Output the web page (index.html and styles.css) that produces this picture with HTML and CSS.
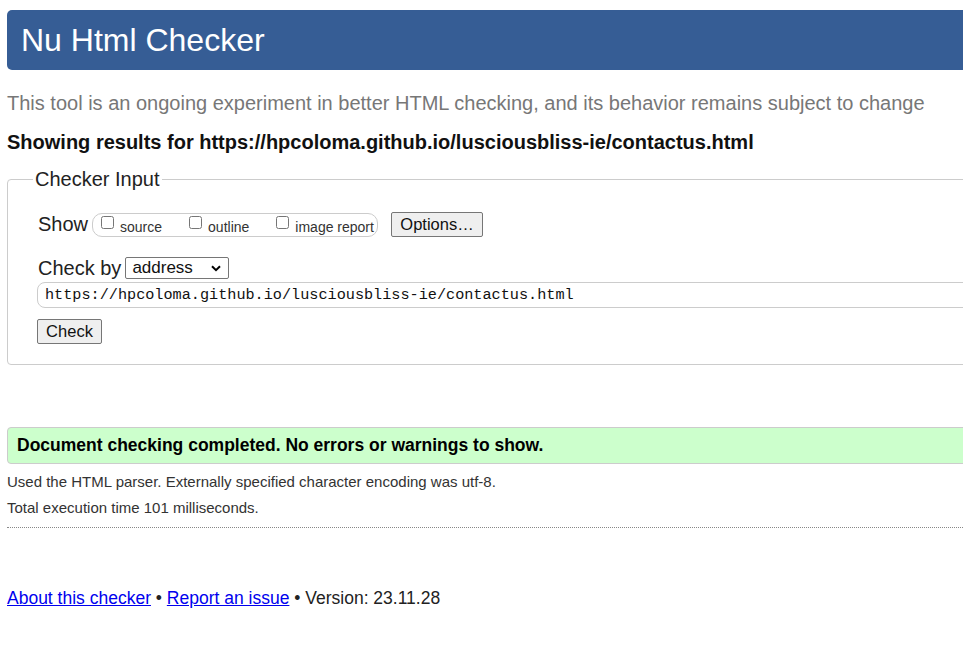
FILE: index.html
```html
<!DOCTYPE html>
<html lang="en">
<head>
<meta charset="utf-8">
<title>Nu Html Checker</title>
<link rel="stylesheet" href="styles.css">
</head>
<body>
<div class="page">
  <h1 class="banner">Nu Html Checker</h1>
  <p class="intro">This tool is an ongoing experiment in better HTML checking, and its behavior remains subject to change</p>
  <p class="results-for">Showing results for https://hpcoloma.github.io/lusciousbliss-ie/contactus.html</p>
  <form class="checker">
    <fieldset class="input-set">
      <legend class="input-legend">Checker Input</legend>
      <div class="row show-row">
        <span class="row-label">Show</span>
        <span class="show-group">
          <label class="opt"><input type="checkbox" class="cb"><span>source</span></label>
          <label class="opt"><input type="checkbox" class="cb"><span>outline</span></label>
          <label class="opt last"><input type="checkbox" class="cb"><span>image report</span></label>
        </span>
        <button type="button" class="btn options">Options…</button>
      </div>
      <div class="row by-row">
        <span class="row-label">Check by</span>
        <span class="select">address
          <svg class="chev" width="10" height="7" viewBox="0 0 10 7"><path d="M1 1.2 L5 5.2 L9 1.2" fill="none" stroke="#000" stroke-width="2"/></svg>
        </span>
      </div>
      <div class="url">https://hpcoloma.github.io/lusciousbliss-ie/contactus.html</div>
      <button type="button" class="btn check">Check</button>
    </fieldset>
  </form>
  <div class="success">Document checking completed. No errors or warnings to show.</div>
  <p class="note">Used the HTML parser. Externally specified character encoding was utf-8.</p>
  <p class="note time">Total execution time 101 milliseconds.</p>
  <hr class="sep">
  <p class="footer"><a href="#">About this checker</a> • <a href="#">Report an issue</a> • Version: 23.11.28</p>
</div>
</body>
</html>
```
FILE: styles.css
```css
html, body {
  margin: 0;
  padding: 0;
  overflow: hidden;
  background: #fff;
}
body {
  font-family: "Liberation Sans", Arial, sans-serif;
  color: #111;
}
.page {
  width: 1400px;
  padding-left: 7px;
}
.banner {
  margin: 10px 0 0;
  height: 60px;
  line-height: 60px;
  padding: 0 14px;
  background: #365d95;
  color: #fff;
  font-size: 32px;
  font-weight: normal;
  border-radius: 5px;
}
.intro {
  margin: 22px 0 0;
  font-size: 20px;
  line-height: 23px;
  color: #777;
}
.results-for {
  margin: 16px 0 0;
  font-size: 20px;
  line-height: 23px;
  font-weight: bold;
  color: #111;
}
.checker { margin: 0; }
.input-set {
  margin: 14px 0 0;
  padding: 0 0 20px 30px;
  border: 1px solid #ccc;
  border-radius: 4px;
}
.input-legend {
  margin-left: -5px;
  padding: 0 2px;
  font-size: 20px;
  line-height: 23px;
  color: #222;
}
.row {
  display: flex;
  align-items: center;
}
.row-label {
  font-size: 20px;
  color: #222;
}
.show-row {
  margin-top: 21px;
  height: 25px;
}
.show-group {
  display: flex;
  align-items: center;
  margin-left: 4px;
  height: 24px;
  width: 286px;
  box-sizing: border-box;
  border: 1px solid #ccc;
  border-radius: 10px;
  padding-left: 8px;
  font-size: 14px;
  color: #333;
}
.opt {
  display: flex;
  align-items: flex-start;
  margin-right: 27px;
}
.opt.last { margin-right: 0; }
.opt span { padding-top: 4px; }
.cb {
  width: 13px;
  height: 13px;
  margin: 1px 6px 0 0;
}
.btn {
  font-family: "Liberation Sans", Arial, sans-serif;
  font-size: 16.5px;
  color: #111;
  background: #efefef;
  border: 1px solid #767676;
  border-radius: 2px;
  padding: 0 8px;
  height: 25px;
}
.options {
  margin-left: 13px;
  width: 92px;
}
.by-row {
  margin-top: 20px;
  height: 22px;
}
.select {
  display: flex;
  align-items: center;
  justify-content: space-between;
  margin-left: 4px;
  width: 104px;
  height: 22px;
  box-sizing: border-box;
  border: 1px solid #767676;
  border-radius: 2px;
  padding: 0 7px 0 6px;
  font-size: 17px;
  color: #111;
}
.url {
  margin: 3px 0 0 -1px;
  height: 26px;
  box-sizing: border-box;
  border: 1px solid #ccc;
  border-radius: 8px;
  padding-left: 7px;
  font-family: "Liberation Mono", "DejaVu Sans Mono", monospace;
  font-size: 15.2px;
  line-height: 24px;
  color: #111;
}
.check {
  display: block;
  margin: 11px 0 0 -1px;
  width: 65px;
}
.success {
  margin-top: 62px;
  height: 37px;
  box-sizing: border-box;
  background: #ccffcc;
  border: 1px solid #ccc;
  border-radius: 4px;
  padding-left: 9px;
  font-size: 17.5px;
  line-height: 35px;
  font-weight: bold;
  color: #000;
}
.note {
  margin: 9px 0 0;
  font-size: 15px;
  line-height: 18px;
  color: #333;
}
.note.time { margin-top: 8px; }
.sep {
  margin: 10px 0 0;
  border: 0;
  border-top: 1px dotted #888;
  height: 0;
}
.footer {
  margin: 59px 0 0;
  font-size: 17.5px;
  line-height: 22px;
  color: #222;
}
.footer a { color: #0000ee; }
```
